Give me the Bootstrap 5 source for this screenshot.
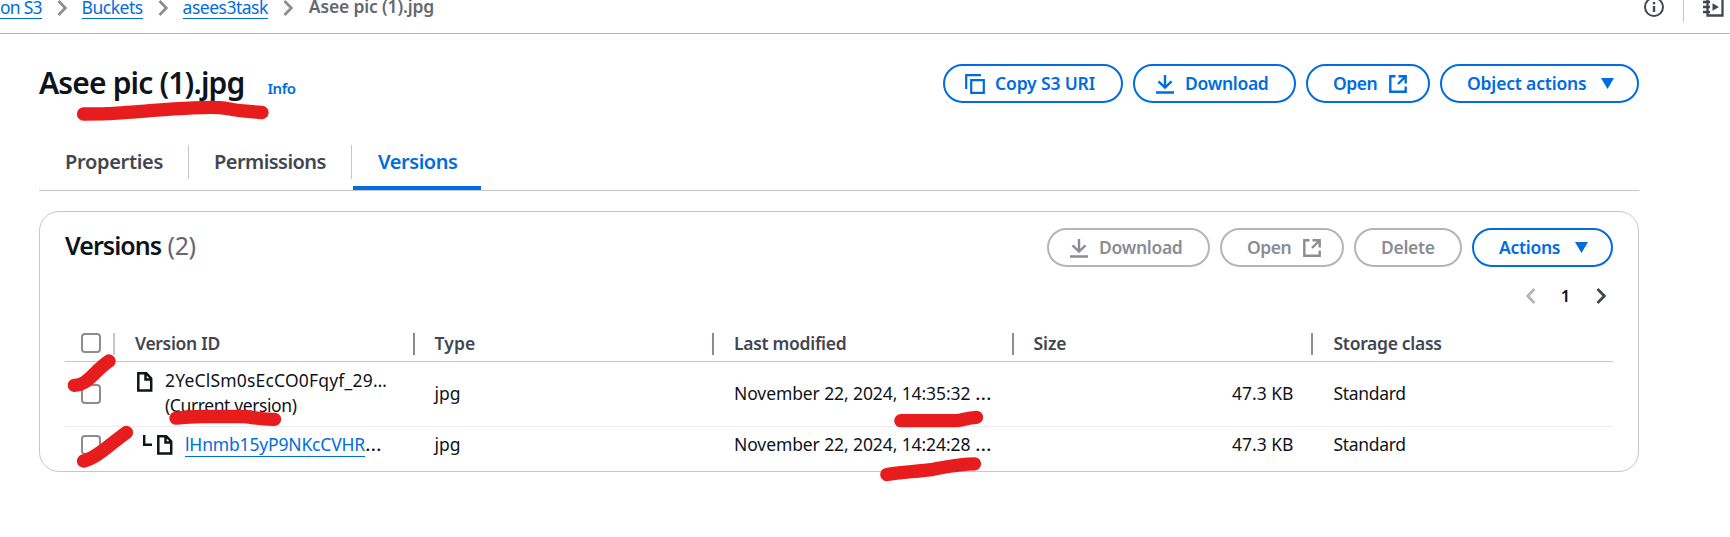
<!DOCTYPE html>
<html lang="en">
<head>
<meta charset="utf-8">
<title>Asee pic (1).jpg - S3 object</title>
<link href="https://cdn.jsdelivr.net/npm/bootstrap@5.3.0/dist/css/bootstrap.min.css" rel="stylesheet">
<style>
:root{--blue:#006ce0;--ink:#0f141a;--mid:#424650;--soft:#656871;--off:#8c8c94;--line:#c6c6cd}
body{font-family:"Noto Sans","Open Sans",sans-serif;font-size:17.5px;line-height:25px;color:var(--ink);background:#fff;height:537px;overflow:hidden;position:relative}
svg{display:block;flex:none}
a{color:var(--blue)}
.topbar{height:34px;border-bottom:1px solid #b4b4bb}
.crumbs{margin:-6px 0 0;height:25px;white-space:nowrap;letter-spacing:-.5px}
.crumbs a,.ver-link{text-decoration:none;border-bottom:1px solid var(--blue);display:inline-block;line-height:22px;height:23px}
.crumbs a{height:24px;line-height:25px}
.crumbs .sep{margin:2px 15px 0}
.crumbs .here{font-weight:600;color:var(--soft);letter-spacing:-.15px;padding-left:1px}
.tools{color:var(--mid);height:33px}
.tools .bar{width:1px;height:22px;background:var(--line);margin:0 19px}
.page{width:1600px;margin-left:39px}
.page-head{padding-top:30px}
h1{font-size:30px;font-weight:600;line-height:38px;letter-spacing:-.84px;margin:0}
.info{font-size:15px;font-weight:600;letter-spacing:-.45px;text-decoration:none;margin-left:23px}
.pill{height:39px;border:2px solid var(--blue);border-radius:20px;color:var(--blue);font-weight:600;font-size:17.5px;line-height:24px;padding:0 0 2px;letter-spacing:-.3px;display:flex;align-items:center;background:#fff;white-space:nowrap}
.pill.off{color:var(--off);border-color:#b4b4bb}
.pill svg{position:relative;top:1px}
.tabs{margin-top:42px;height:46px;border-bottom:1px solid var(--line);font-size:20px;font-weight:600;color:var(--mid);line-height:33px}
.tabs .tab{height:34px;border-right:1px solid var(--line);padding:0 25px;letter-spacing:-.45px}
.tabs .tab:first-child{padding-left:26px}
.tabs .tab.on{border:0;color:var(--blue);height:45px;border-bottom:4px solid var(--blue);border-radius:2px 2px 0 0;margin-left:1px;width:128px}
.panel{margin-top:20px;height:261px;border:1px solid var(--line);border-radius:20px;padding:16px 25px 0}
h2{font-size:25px;font-weight:600;line-height:35px;letter-spacing:-.98px;margin:0}
h2 span{font-weight:400;color:var(--soft);letter-spacing:-.4px;margin-left:1px}
.pager{height:25px;margin-top:16px;padding-right:7px}
.pager b{font-weight:600;font-size:16.5px}
.vers{table-layout:fixed;width:1548px;margin-top:16px;border-collapse:separate;border-spacing:0}
.vers th,.vers td{padding:0 20px;vertical-align:top;white-space:nowrap}
.vers th{height:38px;padding-top:7px;font-weight:600;color:var(--mid);border-bottom:1px solid var(--line);letter-spacing:-.3px;background:linear-gradient(var(--off),var(--off)) no-repeat}
.vers th:last-child{background:none}
.vers th:first-child{background-image:linear-gradient(var(--line),var(--line))}
.vers th,.vers th:first-child{background-size:2px 22px;background-position:right 0 top 9px}
.vers th:last-child,.vers td:last-child{padding-left:21px}
.vers td.text-end{padding-right:19px}
.r1 td{height:65px;padding-top:19px;border-bottom:1px solid #ebebf0}
.r2 td{height:44px;padding-top:5px}
.vers .pick{padding-left:16px;padding-right:0}
.box{width:20px;height:20px;border:2px solid var(--off);border-radius:4px;margin-top:3px}
th .box{margin-top:2px}
.nudge{letter-spacing:-.32px}
.when{letter-spacing:-.1px}
.dots{display:inline-block;letter-spacing:0;transform:scaleX(1.2);transform-origin:0 0}
.marks{position:absolute;left:0;top:0;pointer-events:none}
</style>
<script src="https://cdn.jsdelivr.net/npm/bootstrap@5.3.0/dist/js/bootstrap.bundle.min.js"></script>
</head>
<body>
<svg width="0" height="0" class="position-absolute">
 <defs>
  <g id="chev"><path d="M1.500 1 8.300 8l-6.800 7" fill="none" stroke="currentColor" stroke-width="2.700"/></g>
  <g id="dl" fill="none" stroke="currentColor" stroke-width="2.400"><path d="M9 0v12.500M2.500 6.300 9 12.500 15.500 6.300M0 17.500h18"/></g>
  <g id="ext" fill="none" stroke="currentColor" stroke-width="2.400"><path d="M6.500 1.300H1.300v15.400h15.400V11.500M9.500 1.300h7.200v7.200M16.500 1.500 9 9"/></g>
  <g id="file" fill="none" stroke="currentColor" stroke-width="2.500"><path d="M1.300 1.300h8L14.200 6.500v12H1.300zM8.500 1.500v6h5.700"/></g>
 </defs>
</svg>

<header class="topbar d-flex justify-content-between">
 <nav class="crumbs d-flex align-items-center">
  <a href="#" style="letter-spacing:-.9px;word-spacing:.5px">on S3</a>
  <svg class="sep" width="10" height="16"><use href="#chev" color="#8c8c94"/></svg>
  <a href="#">Buckets</a>
  <svg class="sep" width="10" height="16"><use href="#chev" color="#8c8c94"/></svg>
  <a href="#">asees3task</a>
  <svg class="sep" width="10" height="16"><use href="#chev" color="#8c8c94"/></svg>
  <span class="here">Asee pic (1).jpg</span>
 </nav>
 <div class="tools d-flex align-items-start">
  <svg width="20" height="18" viewBox="0 0 20 18"><g fill="none" stroke="currentColor" stroke-width="2"><circle cx="10" cy="7" r="9"/><path d="M10 6v6" stroke-width="2.400"/></g><path d="M8.800 2h2.400v2.300H8.800z" fill="currentColor"/></svg>
  <span class="bar"></span>
  <svg width="27" height="18" viewBox="0 0 27 18"><g fill="none" stroke="currentColor" stroke-width="2.300"><path d="M4.500 -4V15.500H19.500V-4M0 2h7M0 7h7M0 12h7"/></g><path d="M9.500 3.200v7.600L16 7z" fill="currentColor"/></svg>
 </div>
</header>

<main class="page">
 <div class="page-head d-flex justify-content-between">
  <div class="d-flex align-items-baseline"><h1>Asee pic (1).jpg</h1><a class="info" href="#">Info</a></div>
  <div class="d-flex align-items-start" style="gap:10px">
   <button class="btn pill" style="width:180px;padding-left:20px"><svg width="20" height="20" class="me-2"><path d="M1.200 15V1.200H16M6.200 6.200H18.800V18.800H6.200z" fill="none" stroke="currentColor" stroke-width="2.200"/></svg><span style="margin-left:2px;letter-spacing:-.15px">Copy S3 URI</span></button>
   <button class="btn pill" style="width:163px;padding-left:21px"><svg width="18" height="19" style="margin:2px 11px 0 0"><use href="#dl"/></svg>Download</button>
   <button class="btn pill" style="width:124px;padding-left:25px"><span style="width:56px;text-align:left;letter-spacing:-.5px">Open</span><svg width="18" height="18"><use href="#ext"/></svg></button>
   <button class="btn pill" style="width:199px;padding-left:25px;letter-spacing:-.18px"><span style="width:134px;text-align:left">Object actions</span><svg width="13" height="11"><path d="M0 0h13L6.500 11z" fill="currentColor"/></svg></button>
  </div>
 </div>

 <div class="tabs d-flex">
  <div class="tab" style="letter-spacing:-.32px;width:150px">Properties</div>
  <div class="tab" style="width:163px;letter-spacing:-.55px">Permissions</div>
  <div class="tab on">Versions</div>
 </div>

 <section class="panel">
  <div class="d-flex justify-content-between">
   <h2>Versions <span>(2)</span></h2>
   <div class="d-flex" style="gap:10px">
    <button class="btn pill off" style="width:163px;padding-left:21px"><svg width="18" height="19" style="margin:2px 11px 0 0"><use href="#dl"/></svg>Download</button>
    <button class="btn pill off" style="width:124px;padding-left:25px"><span style="width:56px;text-align:left;letter-spacing:-.5px">Open</span><svg width="18" height="18"><use href="#ext"/></svg></button>
    <button class="btn pill off" style="width:108px;padding-left:25px">Delete</button>
    <button class="btn pill" style="width:141px;padding-left:25px"><span style="width:76px;text-align:left">Actions</span><svg width="13" height="11"><path d="M0 0h13L6.500 11z" fill="currentColor"/></svg></button>
   </div>
  </div>
  <div class="pager d-flex justify-content-end align-items-center">
   <svg width="10" height="16" style="margin-top:1px"><g transform="matrix(-1 0 0 1 10 0)" color="#b4b4bb"><use href="#chev"/></g></svg>
   <b style="width:60px;text-align:center;padding-right:1px">1</b>
   <svg width="10" height="16" color="#424650" style="margin-top:1px"><use href="#chev"/></svg>
  </div>
  <table class="vers">
   <colgroup><col style="width:50px"><col style="width:299.500px"><col style="width:299.500px"><col style="width:299.500px"><col style="width:299px"><col></colgroup>
   <thead><tr><th class="pick"><div class="box"></div></th><th>Version ID</th><th style="letter-spacing:.1px">Type</th><th>Last modified</th><th style="letter-spacing:-.07px">Size</th><th>Storage class</th></tr></thead>
   <tbody>
    <tr class="r1">
     <td class="pick"><div class="box"></div></td>
     <td style="padding-top:6px"><div class="d-flex"><svg width="16" height="20" style="margin:4px 12px 0 2px"><use href="#file"/></svg><div><span style="letter-spacing:.19px">2YeClSm0sEcCO0Fqyf_29…</span><br><span style="letter-spacing:-.4px">(Current version)</span></div></div></td>
     <td>jpg</td><td class="when">November 22, 2024, 14:35:32 <span class="dots">…</span></td><td class="text-end">47.3 KB</td><td class="nudge">Standard</td>
    </tr>
    <tr class="r2">
     <td class="pick"><div class="box"></div></td>
     <td><div class="d-flex"><svg width="10" height="14" style="margin:3px 4px 0 8px"><path d="M1.200 0V9.800H9" fill="none" stroke="currentColor" stroke-width="2.400"/></svg><svg width="16" height="20" style="margin:3px 12px 0 0"><use href="#file"/></svg><a class="ver-link" style="letter-spacing:-.17px;height:25px;line-height:25px" href="#">lHnmb15yP9NKcCVHR</a><span class="dots">…</span></div></td>
     <td>jpg</td><td class="when">November 22, 2024, 14:24:28 <span class="dots">…</span></td><td class="text-end">47.3 KB</td><td class="nudge">Standard</td>
    </tr>
   </tbody>
  </table>
 </section>
</main>

<!-- hand-drawn red marker strokes over the page -->
<svg class="marks" width="1730" height="537" fill="none" stroke="#e71d1d" stroke-width="13.300" stroke-linecap="round" stroke-linejoin="round">
 <path d="M83.500 114C95 114 100 114 107 113.700C130 112.500 168 109 193 107.900Q210 107 220 107.600C228 108.300 232 110 240 110.600L262 112.500"/>
 <path d="M74.300 385.300C88 385 92 373 109 361"/>
 <path d="M176 418.200C186 417.500 192 416.500 203 416.500H243C252 416.800 257 419.500 274.500 419.300"/>
 <path d="M83.500 461C97 458 110 444 126.500 432.500"/>
 <path d="M900.800 420.700H955C963 420.500 966 417.700 976.500 417.300"/>
 <path d="M886.800 474.500C900 472 918 471.500 933 469.300C950 466 960 463.800 974.500 463.800"/>
</svg>
</body>
</html>
